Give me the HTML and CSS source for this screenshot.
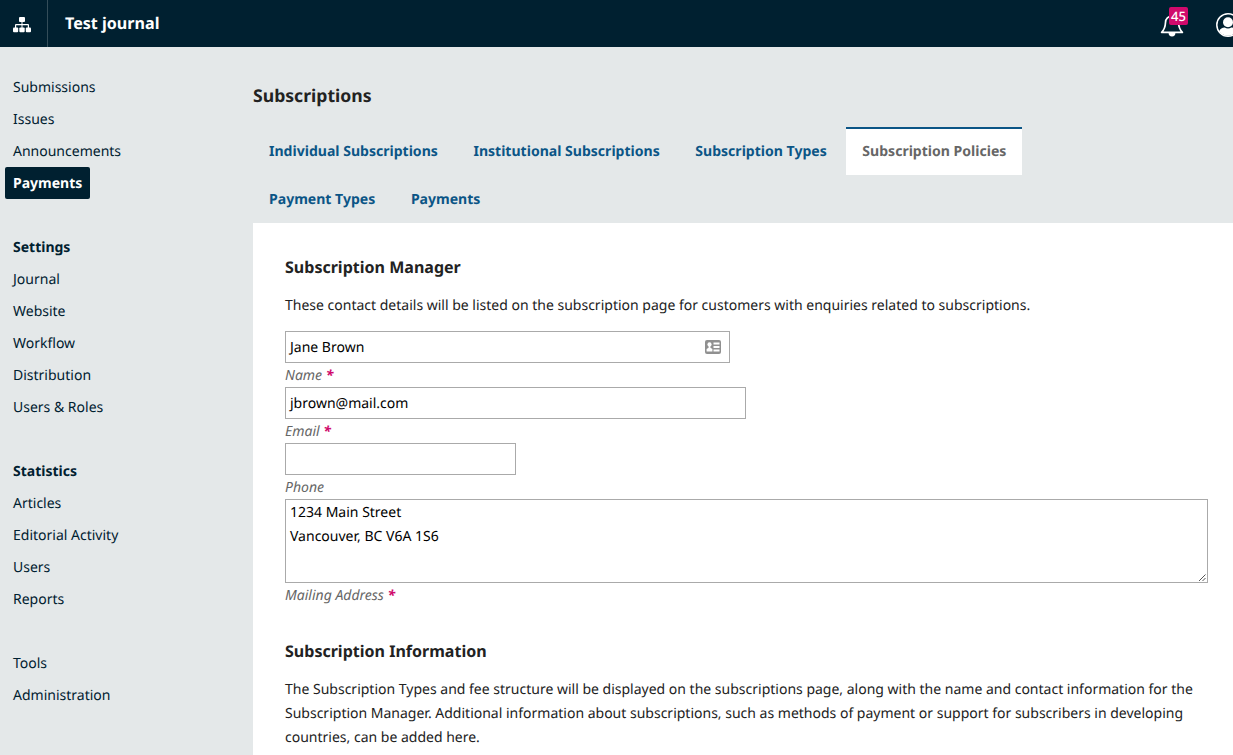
FILE: index.html
```html
<!DOCTYPE html>
<html lang="en">
<head>
<meta charset="utf-8">
<title>Subscriptions</title>
<link rel="stylesheet" href="styles.css">
</head>
<body>
<header class="topbar">
  <div class="apps"><svg width="18" height="16" viewBox="0 0 18 16" fill="#fff"><rect x="6" y="0" width="6" height="5" rx="1"/><path d="M8.500 5h1v2h5.500q1 0 1 1v3h-1.200V8.200H9.500V11h-1V8.200H3.200V11H2V8q0-1 1-1h5.500z"/><rect x="0" y="10.500" width="5.200" height="4.800" rx="1"/><rect x="6.300" y="10.500" width="5.400" height="4.800" rx="1"/><rect x="12.800" y="10.500" width="5.200" height="4.800" rx="1"/></svg></div>
  <div class="title">Test journal</div>
  <div class="bell"><svg width="24" height="24" viewBox="0 0 24 24" fill="none" stroke="#fff" stroke-width="1.700"><path d="M1.600 19.300C4.500 16.500 5.300 14.500 5.500 9.500a6.500 6.500 0 0 1 13 0c.2 5 1 7 3.900 9.800z" stroke-linejoin="round"/><path d="M8.600 20a3.400 3.400 0 0 0 6.800 0z" fill="#fff" stroke="none"/></svg><span class="badge">45</span></div>
  <div class="user"><svg width="24" height="24" viewBox="0 0 24 24"><circle cx="12" cy="12" r="11.200" fill="none" stroke="#fff" stroke-width="1.500"/><circle cx="12" cy="9.300" r="5" fill="#fff"/><path fill="#fff" d="M3.200 18.200c1-2.500 3-3.700 5.500-3.700 2 1.300 4.600 1.300 6.600 0 2.500 0 4.500 1.200 5.500 3.700a10.800 10.800 0 0 1-17.600 0z"/></svg></div>
</header>
<div class="body">
  <nav class="side">
    <a>Submissions</a><a>Issues</a><a>Announcements</a><a class="current">Payments</a>
    <h2>Settings</h2><a>Journal</a><a>Website</a><a>Workflow</a><a>Distribution</a><a>Users &amp; Roles</a>
    <h2>Statistics</h2><a>Articles</a><a>Editorial Activity</a><a>Users</a><a>Reports</a>
    <a class="gap">Tools</a><a>Administration</a>
  </nav>
  <main class="main">
    <h1>Subscriptions</h1>
    <div class="tabs"><a>Individual Subscriptions</a><a>Institutional Subscriptions</a><a>Subscription Types</a><a class="active">Subscription Policies</a><a>Payment Types</a><a>Payments</a></div>
    <section class="panel">
      <h3>Subscription Manager</h3>
      <p>These contact details will be listed on the subscription page for customers with enquiries related to subscriptions.</p>
      <div class="field name"><span>Jane Brown</span><svg width="16" height="14" viewBox="0 0 16 14"><rect width="16" height="14" rx="2" fill="#909090"/><path d="M8.500 2.500h6v2h-6zM8.500 6h6v2h-6zM8.500 9.500h6v2h-6z" fill="#fff"/><circle cx="4.500" cy="4.400" r="2.100" fill="#fff"/><path d="M3.600 6h1.800v1.700l2 1.200v2.600H1.600V8.900l2-1.200z" fill="#fff"/></svg></div>
      <label>Name <b>*</b></label>
      <div class="field email">jbrown@mail.com</div>
      <label>Email <b>*</b></label>
      <div class="field phone"></div>
      <label>Phone</label>
      <div class="field area">1234 Main Street<br>Vancouver, BC V6A 1S6<svg class="grip" width="9" height="9" viewBox="0 0 9 9"><path d="M1 8L7.500 1.500M4.500 8L7.500 5" stroke="#555" fill="none"/></svg></div>
      <label>Mailing Address <b>*</b></label>
      <h3 class="info">Subscription Information</h3>
      <p>The Subscription Types and fee structure will be displayed on the subscriptions page, along with the name and contact information for the Subscription Manager. Additional information about subscriptions, such as methods of payment or support for subscribers in developing countries, can be added here.</p>
    </section>
  </main>
</div>
</body>
</html>
```
FILE: styles.css
```css
* { box-sizing: border-box; }
body { margin: 0; height: 755px; overflow: hidden; background: #e4e8e9; color: #222; font: 14px/24px "Noto Sans", sans-serif; text-rendering: geometricPrecision; }
h1, h2, h3, p { margin: 0; }
.topbar { height: 47px; background: #002030; color: #fff; display: flex; align-items: center; overflow: hidden; }
.apps { width: 48px; height: 47px; border-right: 1px solid #344d59; display: flex; align-items: center; padding: 3px 0 0 13px; flex: none; }
.title { font-size: 16.1px; font-weight: 700; padding: 0 0 2px 17px; flex: 1; }
.bell { position: relative; width: 24px; height: 24px; margin: 2px 31.500px 0 0; flex: none; }
.badge { position: absolute; left: 9px; top: -6px; width: 19px; height: 18px; border-radius: 2px; background: #d00a6c; font-size: 13px; font-weight: 500; line-height: 18px; text-align: center; }
.user { width: 17.500px; height: 24px; margin-top: 3px; flex: none; }
svg { display: block; }
.body { display: flex; height: 708px; }
.side { width: 253px; flex: none; padding: 24px 0 0 5px; display: flex; flex-direction: column; align-items: flex-start; }
.side a, .side h2 { font-size: 14px; line-height: 32px; height: 32px; padding: 1px 8px 0; color: #002030; flex: none; }
.side h2, .side .gap { margin-top: 32px; }
.side .current { background: #002030; color: #fff; font-weight: 700; border-radius: 2px; }
.main { width: 980px; flex: none; padding-top: 37px; }
h1 { font-size: 17.600px; line-height: 24px; }
.tabs { display: flex; flex-wrap: wrap; column-gap: 3.600px; margin-top: 19px; padding-right: 100px; }
.tabs a { height: 48px; line-height: 48px; padding: 1px 16px 0; font-size: 14.050px; font-weight: 700; color: #0b5586; }
.tabs .active { background: #fff; color: #666; box-shadow: inset 0 2px #0b5586; }
.panel { background: #fff; height: 540px; padding: 32px 25px 0 32px; }
h3 { font-size: 16.050px; line-height: 24px; }
p { padding-top: 15px; }
.field { border: 1px solid #aaa; background: #fff; color: #000; height: 32px; line-height: 30px; padding: 1px 4px 0; }
.name { width: 445px; margin-top: 13px; display: flex; justify-content: space-between; align-items: center; padding: 0 8px 0 4px; }
.name span { padding-top: 1px; }
.email { width: 461px; }
.phone { width: 231px; }
.area { position: relative; width: 923px; height: 84px; line-height: 24px; }
.grip { position: absolute; right: 0; bottom: 0; }
label { display: block; height: 24px; line-height: 24px; padding-top: 1px; font-style: italic; color: #666; }
label b { color: #d00a6c; }
.info { margin-top: 32px; }
```
